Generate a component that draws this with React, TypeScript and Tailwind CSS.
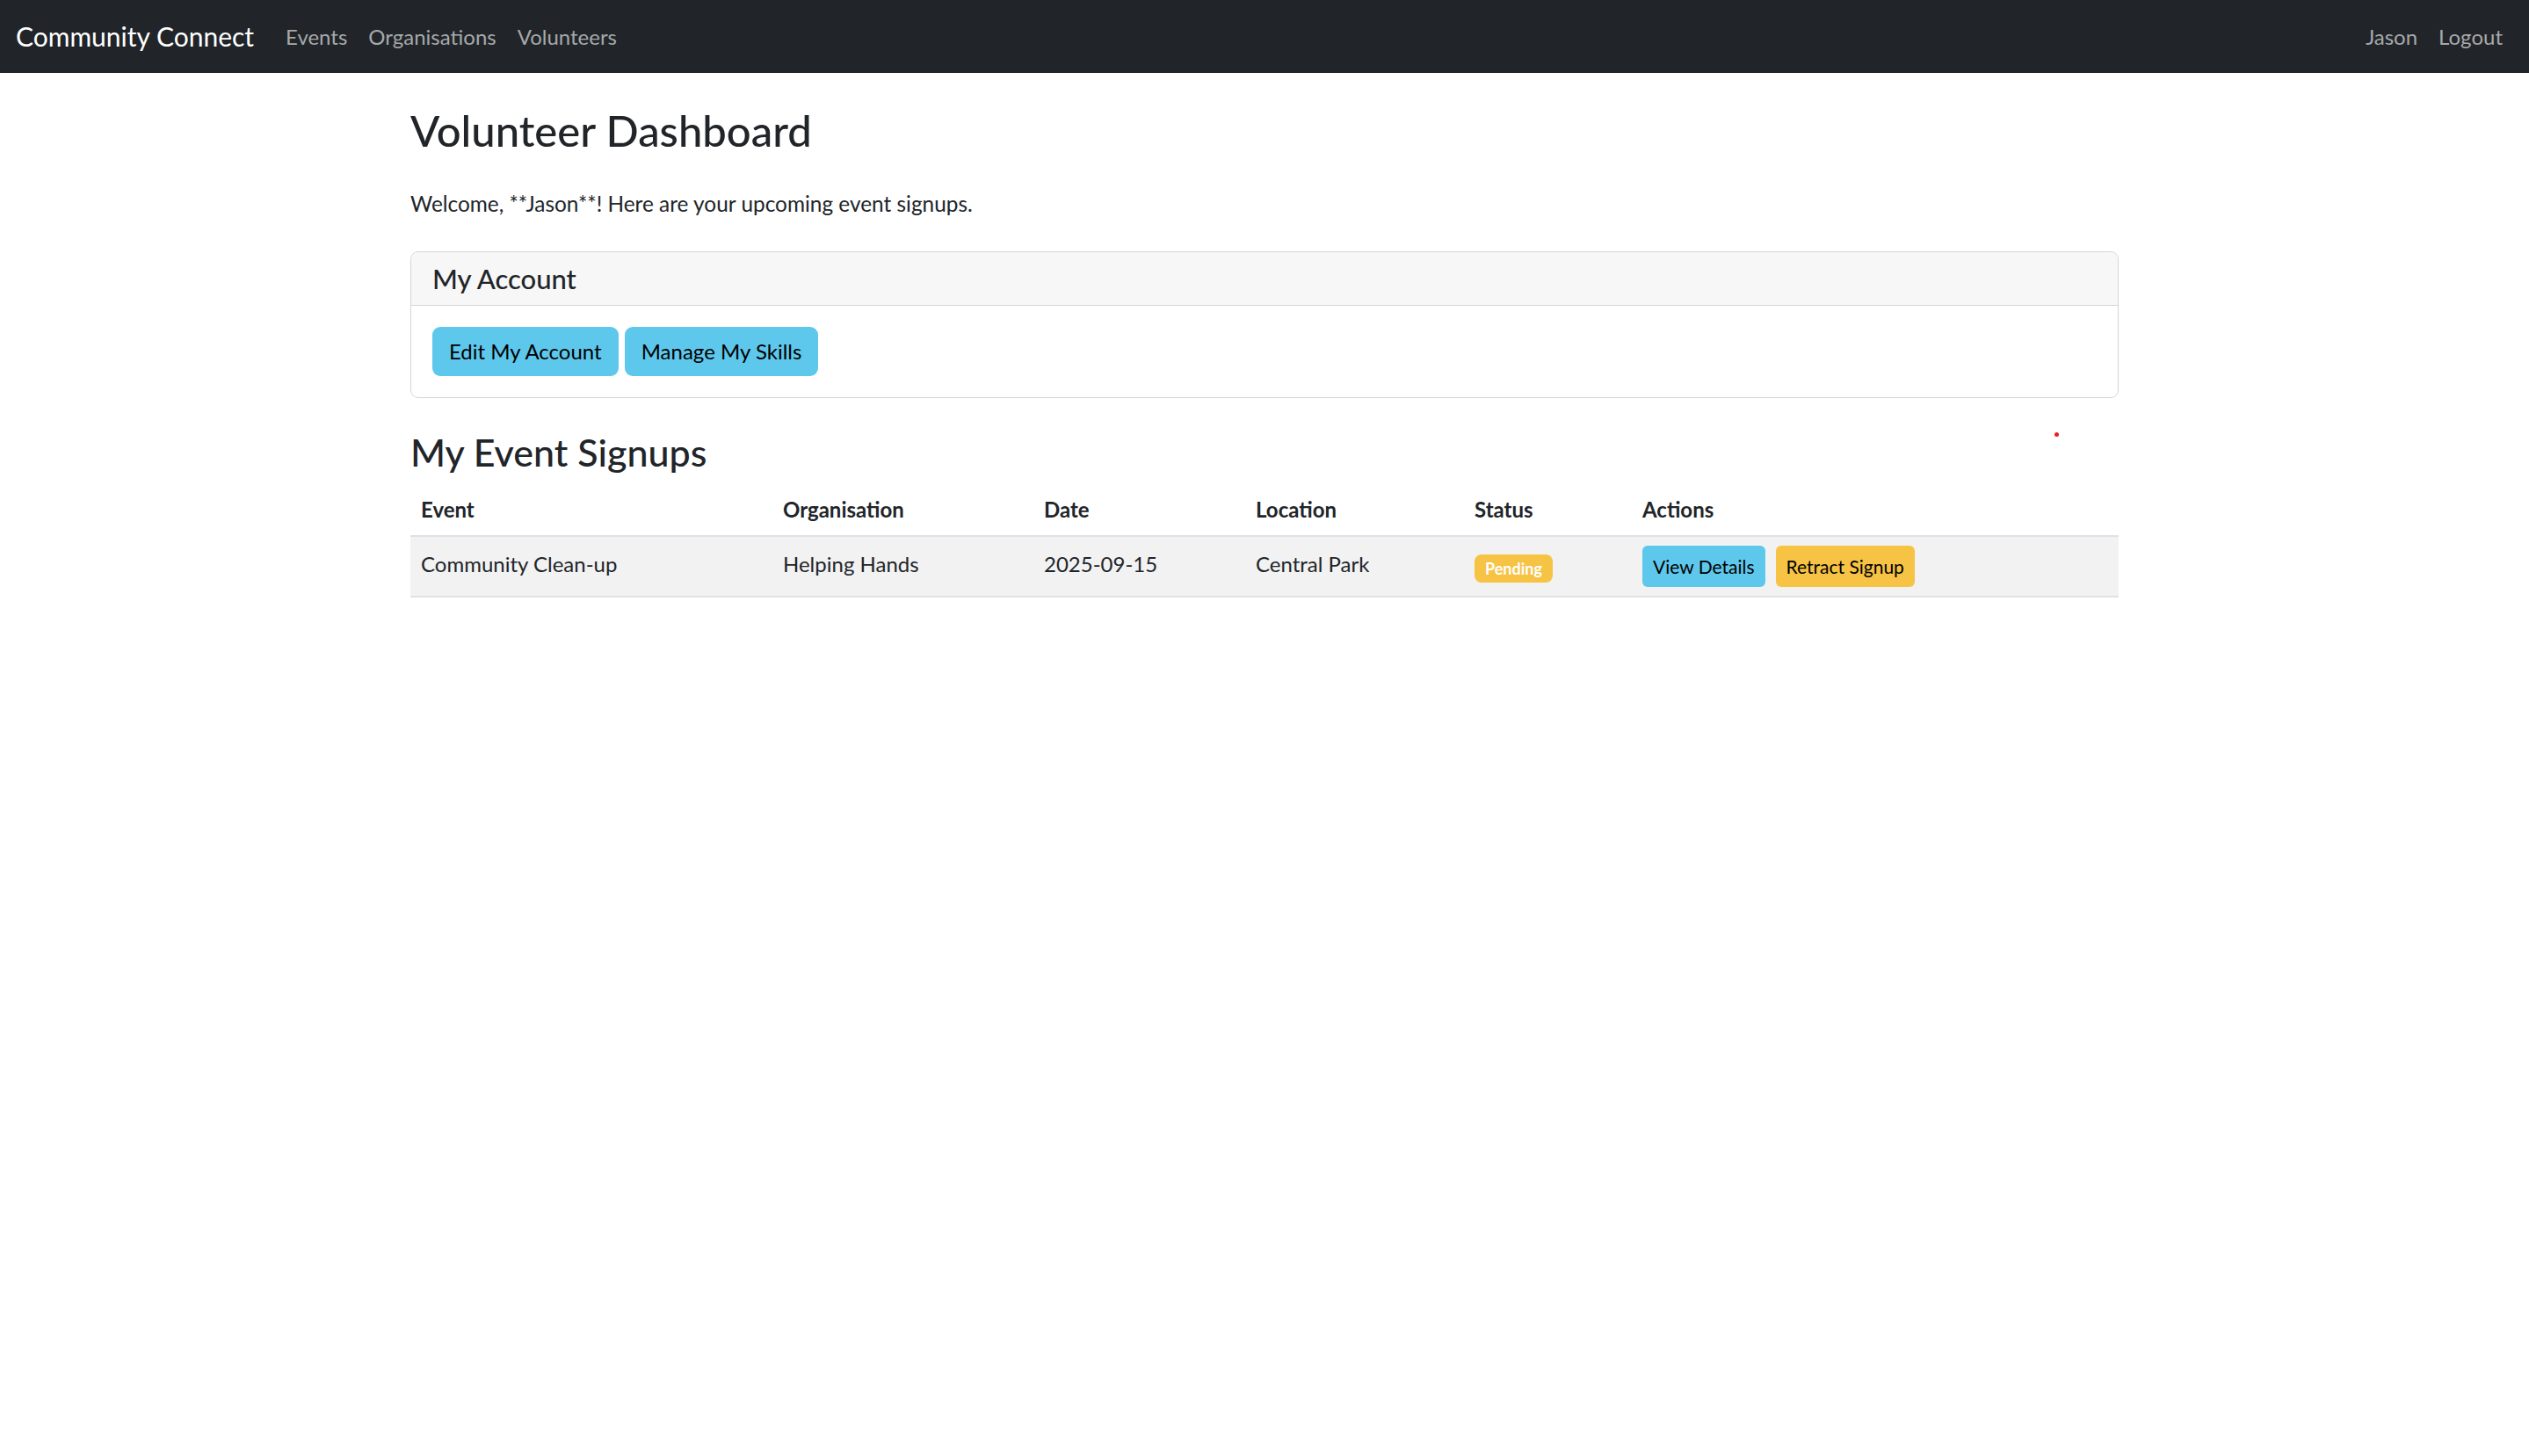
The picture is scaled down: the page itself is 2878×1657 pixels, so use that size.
const signups = [
  {
    event: "Community Clean-up",
    org: "Helping Hands",
    date: "2025-09-15",
    location: "Central Park",
    status: "Pending",
  },
];

export default function App() {
  return (
    <div className="relative min-h-screen bg-white font-['Lato','Liberation_Sans',sans-serif] text-[#212529]">
      <nav className="flex h-[83px] items-center justify-between bg-[#212529] px-[18px]">
        <div className="flex items-center">
          <span className="mr-[24px] text-[30px] text-white">Community Connect</span>
          <a className="px-[12px] text-[24px] text-[#a6a8aa]">Events</a>
          <a className="px-[12px] text-[24px] text-[#a6a8aa]">Organisations</a>
          <a className="px-[12px] text-[24px] text-[#a6a8aa]">Volunteers</a>
        </div>
        <div className="flex items-center">
          <a className="px-[12px] text-[24px] text-[#a6a8aa]">Jason</a>
          <a className="px-[12px] text-[24px] text-[#a6a8aa]">Logout</a>
        </div>
      </nav>

      <main className="mx-auto w-[1944px] pt-[35px]">
        <h1 className="mb-[36px] text-[49px] font-medium leading-[60px]">Volunteer Dashboard</h1>
        <p className="mb-[36px] text-[24.4px] leading-[36px]">
          Welcome, **Jason**! Here are your upcoming event signups.
        </p>

        <div className="mb-[38px] rounded-[9px] border border-[#d6d6d6]">
          <div className="rounded-t-[9px] border-b border-[#d6d6d6] bg-[#f7f7f7] px-[24px] py-[12px]">
            <h5 className="text-[31px] font-medium leading-[36px]">My Account</h5>
          </div>
          <div className="flex gap-[7px] p-[24px]">
            <button className="h-[56px] rounded-[9px] bg-[#5ec8ec] px-[19px] text-[24px] text-black">
              Edit My Account
            </button>
            <button className="h-[56px] rounded-[9px] bg-[#5ec8ec] px-[19px] text-[24px] text-black">
              Manage My Skills
            </button>
          </div>
        </div>

        <h2 className="mb-[12px] text-[43px] font-medium leading-[48px]">My Event Signups</h2>

        <table className="w-full table-fixed border-collapse text-left text-[24px]">
          <thead>
            <tr className="border-b-2 border-[#dee2e6]">
              <th className="w-[412px] px-[12px] py-[11px] font-bold leading-[36px]">Event</th>
              <th className="w-[297px] px-[12px] py-[11px] font-bold leading-[36px]">Organisation</th>
              <th className="w-[241px] px-[12px] py-[11px] font-bold leading-[36px]">Date</th>
              <th className="w-[249px] px-[12px] py-[11px] font-bold leading-[36px]">Location</th>
              <th className="w-[191px] px-[12px] py-[11px] font-bold leading-[36px]">Status</th>
              <th className="px-[12px] py-[11px] font-bold leading-[36px]">Actions</th>
            </tr>
          </thead>
          <tbody>
            {signups.map((s) => (
              <tr key={s.event} className="border-b-2 border-[#dee2e6] bg-[#f2f2f2]">
                <td className="px-[12px] pb-[14px] pt-[8px] align-middle leading-[36px]">{s.event}</td>
                <td className="px-[12px] pb-[14px] pt-[8px] align-middle leading-[36px]">{s.org}</td>
                <td className="px-[12px] pb-[14px] pt-[8px] align-middle leading-[36px]">{s.date}</td>
                <td className="px-[12px] pb-[14px] pt-[8px] align-middle leading-[36px]">{s.location}</td>
                <td className="px-[12px] py-[10px] align-middle">
                  <span className="inline-block rounded-[8px] bg-[#f6c344] px-[12px] py-[6px] text-[18px] font-bold leading-[20px] text-white">
                    {s.status}
                  </span>
                </td>
                <td className="px-[12px] py-[10px] align-middle">
                  <div className="flex gap-[12px]">
                    <button className="h-[47px] rounded-[6px] bg-[#5ec8ec] px-[12px] text-[21px] text-black">
                      View Details
                    </button>
                    <button className="h-[47px] rounded-[6px] bg-[#f6c344] px-[12px] text-[21px] text-black">
                      Retract Signup
                    </button>
                  </div>
                </td>
              </tr>
            ))}
          </tbody>
        </table>
      </main>

      <div className="absolute left-[2338px] top-[492px] h-[5px] w-[5px] rounded-full bg-[#e8201f]" />
    </div>
  );
}
